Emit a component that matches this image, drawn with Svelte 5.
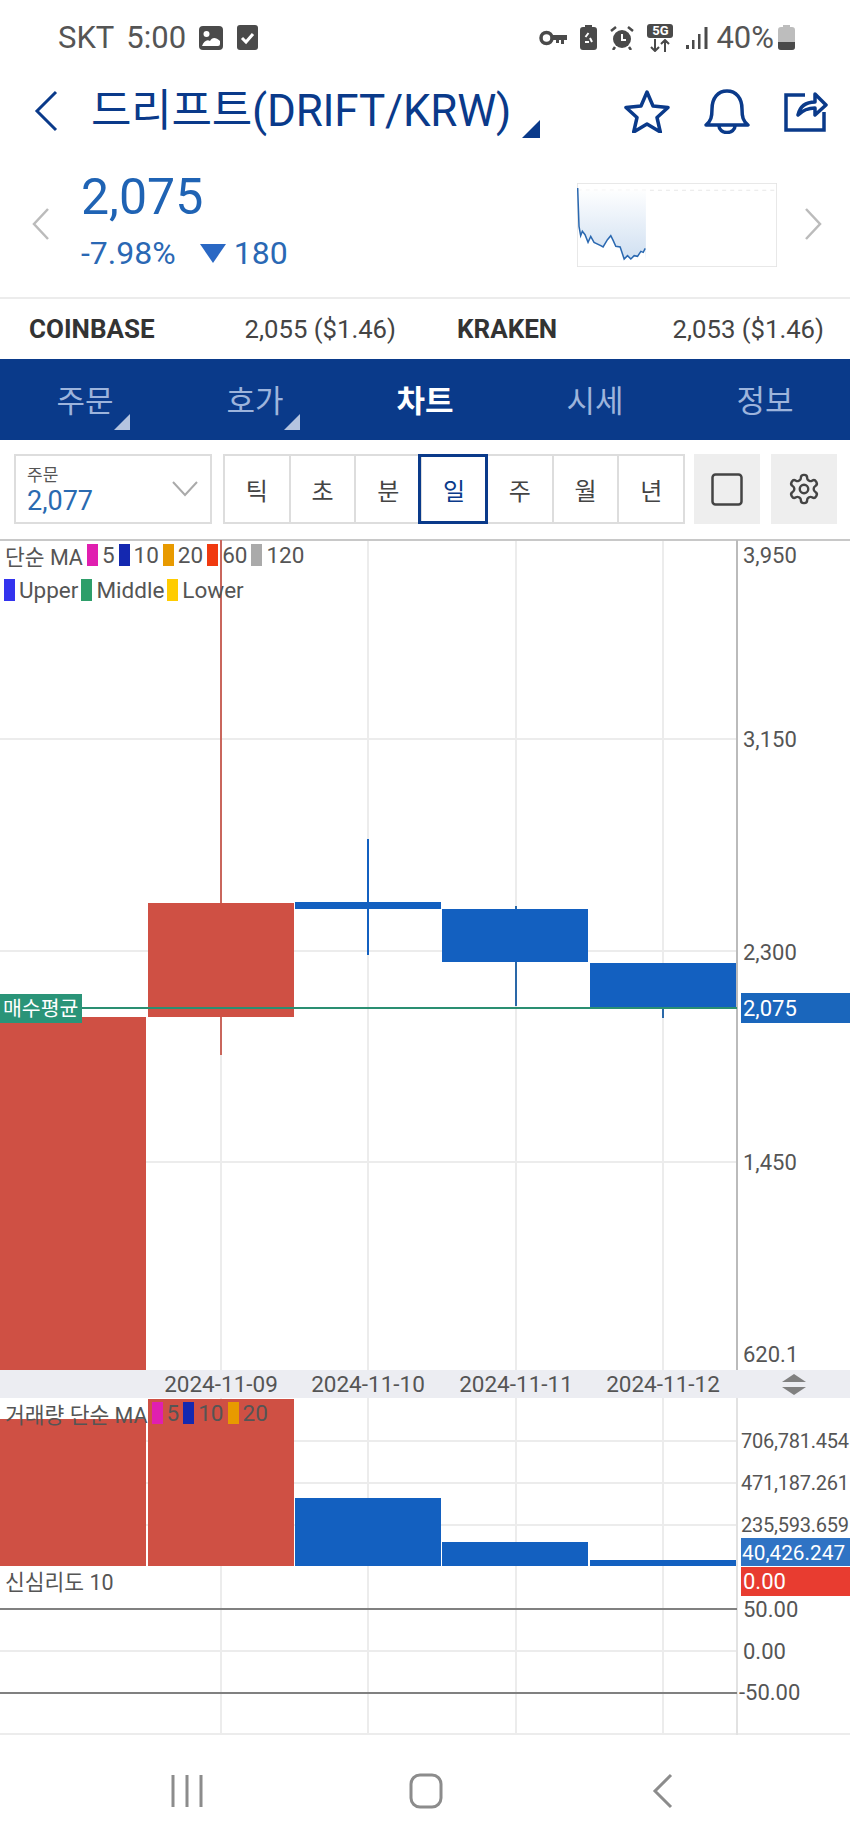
<script>
  const tabs = [
    { label: '주문', tri: true },
    { label: '호가', tri: true },
    { label: '차트', active: true },
    { label: '시세' },
    { label: '정보' }
  ];
  const periods = ['틱', '초', '분', '일', '주', '월', '년'];
  const gridX = [221, 368, 516, 663];
  const legendMain = [
    { c: '#e01fb0', t: '5' }, { c: '#1428b0', t: '10' }, { c: '#e89a00', t: '20' },
    { c: '#f03a10', t: '60' }, { c: '#aaaaaa', t: '120' }
  ];
  const legendBand = [
    { c: '#3333ee', t: 'Upper' }, { c: '#2e9e6a', t: 'Middle' }, { c: '#ffcc00', t: 'Lower' }
  ];
  const legendVol = legendMain.slice(0, 3);
  const spark = '456,565 460,680 465,708 470,695 478,705 487,728 495,710 505,728 525,738 532,742 545,720 555,708 562,722 570,740 583,742 595,778 605,768 615,778 625,768 635,770 645,755 652,758 658,746';
</script>

<div class="page">
  <header class="status">
    <div class="st-left">
      <span class="st-text">SKT</span>
      <span class="st-text time">5:00</span>
      <svg class="ic-img" width="24" height="24" viewBox="0 0 24 24"><rect x="0" y="0" width="24" height="24" rx="4" fill="#4a4a4a"/><circle cx="7.500" cy="8" r="3" fill="#fff"/><path d="M3 20c2-5 5-7 8-5 2-4 6-4 10 0v3a2 2 0 0 1-2 2z" fill="#fff"/></svg>
      <svg class="ic-chk" width="21" height="25" viewBox="0 0 21 25"><rect width="21" height="25" rx="3" fill="#4a4a4a"/><path d="M5 13l4 4 7-8" fill="none" stroke="#fff" stroke-width="3"/></svg>
    </div>
    <div class="st-right">
      <svg width="28" height="16" viewBox="0 0 28 16"><circle cx="7.500" cy="8" r="5.500" fill="none" stroke="#4a4a4a" stroke-width="3.500"/><path d="M13 5h15v5h-3v4h-3v-4h-2v3h-3v-3h-4z" fill="#4a4a4a"/></svg>
      <svg width="17" height="25" viewBox="0 0 17 25"><path d="M5 0h7v2h2a3 3 0 0 1 3 3v17a3 3 0 0 1-3 3H3a3 3 0 0 1-3-3V5a3 3 0 0 1 3-3h2z" fill="#4a4a4a"/><path d="M8.500 8l-3 4M5 17h4M12 17l-2-4" stroke="#fff" stroke-width="2" fill="none"/></svg>
      <svg width="24" height="24" viewBox="0 0 24 24"><circle cx="12" cy="13" r="9" fill="#4a4a4a"/><path d="M12 8v6h4" stroke="#fff" stroke-width="2" fill="none"/><path d="M1 5l5-4M23 5l-5-4M5 21l-2 3M19 21l2 3" stroke="#4a4a4a" stroke-width="2.500" fill="none"/></svg>
      <span class="g5">
        <span class="g5-box">5G</span>
        <svg width="20" height="13" viewBox="0 0 20 13"><path d="M5 0v12M1 8l4 4 4-4M15 13V1M11 5l4-4 4 4" stroke="#4a4a4a" stroke-width="2" fill="none"/></svg>
      </span>
      <svg width="22" height="22" viewBox="0 0 22 22"><g fill="#4a4a4a"><rect x="0" y="18" width="3" height="4"/><rect x="6" y="13" width="2.500" height="9"/><rect x="12" y="7" width="2.500" height="15"/><rect x="18.500" y="0" width="3" height="22"/></g></svg>
      <span class="st-text pct">40%</span>
      <svg width="17" height="25" viewBox="0 0 17 25"><path d="M5 0h7v2h2a3 3 0 0 1 3 3v17a3 3 0 0 1-3 3H3a3 3 0 0 1-3-3V5a3 3 0 0 1 3-3h2z" fill="#bdbdbd"/><path d="M0 17h17v5a3 3 0 0 1-3 3H3a3 3 0 0 1-3-3z" fill="#4a4a4a"/></svg>
    </div>
  </header>

  <section class="title-row">
    <svg class="back" width="24" height="42" viewBox="0 0 24 42"><path d="M22 2L3 21l19 19" fill="none" stroke="#0a3a8a" stroke-width="3"/></svg>
    <h1>드리프트(DRIFT/KRW)</h1>
    <span class="corner"></span>
    <div class="title-icons">
      <svg width="46" height="44" viewBox="0 0 46 44"><path d="M23 3l6 14 15 1.500-11 10 3.300 14.500L23 35l-13.300 8L13 28.500 2 18.500 17 17z" fill="none" stroke="#0a3a8a" stroke-width="3.500" stroke-linejoin="round"/></svg>
      <svg width="46" height="46" viewBox="0 0 46 46"><path d="M2 37c5-4 6-8 6-16 0-11 6-18 15-18s15 7 15 18c0 8 1 12 6 16z" fill="none" stroke="#0a3a8a" stroke-width="3.500" stroke-linejoin="round"/><path d="M15 38a8 6.500 0 0 0 16 0" fill="none" stroke="#0a3a8a" stroke-width="3.500"/></svg>
      <svg width="44" height="42" viewBox="0 0 44 42"><path d="M21 5H2v35h38V22" fill="none" stroke="#0a3a8a" stroke-width="3.500"/><path d="M14 25c2-9 8-13 17-13V4l11 11-11 10v-7c-7 0-12 2-17 7z" fill="none" stroke="#0a3a8a" stroke-width="3.500" stroke-linejoin="round"/></svg>
    </div>
  </section>

  <section class="price-row">
    <svg class="chev" width="18" height="32" viewBox="0 0 18 32"><path d="M16 1L2 16l14 15" fill="none" stroke="#bbb" stroke-width="2.500"/></svg>
    <div class="price">
      <div class="big">2,075</div>
      <div class="sub"><span>-7.98%</span><span class="delta"><i class="down"></i>180</span></div>
    </div>
    <svg class="spark" width="200" height="84" viewBox="454 550 598 252" preserveAspectRatio="none">
      <defs>
        <linearGradient id="sf" x1="0" y1="0" x2="0" y2="1"><stop offset="0" stop-color="#fff"/><stop offset="1" stop-color="#cfdff1"/></linearGradient>
      </defs>
      <rect x="455" y="551" width="596" height="250" fill="#fff" stroke="#e4e4e4" stroke-width="3"/>
      <path d="M456 572H1050" stroke="#e8e8e8" stroke-width="3" stroke-dasharray="12 12"/>
      <polygon points="{spark} 660,782 660,572 456,572" fill="url(#sf)"/>
      <polyline points={spark} fill="none" stroke="#2a68b0" stroke-width="4.500"/>
    </svg>
    <svg class="chev" width="18" height="32" viewBox="0 0 18 32"><path d="M2 1l14 15L2 31" fill="none" stroke="#bbb" stroke-width="2.500"/></svg>
  </section>

  <section class="exchange">
    <div class="ex"><b>COINBASE</b><span>2,055 ($1.46)</span></div>
    <div class="ex"><b>KRAKEN</b><span>2,053 ($1.46)</span></div>
  </section>

  <nav class="tabs">
    {#each tabs as t}
      <div class="tab" class:active={t.active}>{t.label}{#if t.tri}<i class="tri"></i>{/if}</div>
    {/each}
  </nav>

  <section class="tools">
    <div class="select">
      <div class="sel-text"><small>주문</small><span>2,077</span></div>
      <svg width="26" height="16" viewBox="0 0 26 16"><path d="M1 1l12 13L25 1" fill="none" stroke="#aaa" stroke-width="2"/></svg>
    </div>
    <div class="seg">
      {#each periods as p}
        <div class="cell" class:on={p === '일'}>{p}</div>
      {/each}
    </div>
    <div class="sq">
      <svg width="32" height="33" viewBox="0 0 32 33"><rect x="1.500" y="1.500" width="29" height="30" rx="3" fill="none" stroke="#444" stroke-width="2.500"/></svg>
    </div>
    <div class="sq">
      <svg width="34" height="34" viewBox="0 0 24 24" fill="none" stroke="#444" stroke-width="1.700"><path d="M12.220 2h-.44a2 2 0 0 0-2 2v.18a2 2 0 0 1-1 1.730l-.43.250a2 2 0 0 1-2 0l-.15-.08a2 2 0 0 0-2.730.73l-.22.380a2 2 0 0 0 .73 2.730l.15.100a2 2 0 0 1 1 1.720v.510a2 2 0 0 1-1 1.740l-.15.090a2 2 0 0 0-.73 2.730l.22.380a2 2 0 0 0 2.730.73l.15-.08a2 2 0 0 1 2 0l.43.250a2 2 0 0 1 1 1.730V20a2 2 0 0 0 2 2h.44a2 2 0 0 0 2-2v-.18a2 2 0 0 1 1-1.730l.43-.250a2 2 0 0 1 2 0l.15.080a2 2 0 0 0 2.730-.73l.22-.390a2 2 0 0 0-.73-2.730l-.15-.080a2 2 0 0 1-1-1.740v-.500a2 2 0 0 1 1-1.740l.15-.090a2 2 0 0 0 .73-2.730l-.22-.380a2 2 0 0 0-2.730-.73l-.15.080a2 2 0 0 1-2 0l-.43-.250a2 2 0 0 1-1-1.730V4a2 2 0 0 0-2-2z"/><circle cx="12" cy="12" r="3"/></svg>
    </div>
  </section>

  <section class="pane main">
    <svg width="850" height="831" viewBox="0 539 850 831">
      <g class="grid">
        {#each gridX as x}<line x1={x} x2={x} y1="540" y2="1370"/>{/each}
        {#each [739, 951, 1162] as y}<line x1="0" x2="737" y1={y} y2={y}/>{/each}
      </g>
      <rect x="0" y="539" width="850" height="2" fill="#c8c8c8"/>
      <rect x="736" y="540" width="2" height="830" fill="#bbb"/>
      <line x1="221" x2="221" y1="540" y2="1055" stroke="#c9665c" stroke-width="2"/>
      <line x1="368" x2="368" y1="839" y2="955" stroke="#1360c0" stroke-width="2"/>
      <line x1="516" x2="516" y1="906" y2="1006" stroke="#2a68a8" stroke-width="2"/>
      <line x1="663" x2="663" y1="1008" y2="1018" stroke="#2a68a8" stroke-width="2"/>
      <rect x="0" y="1017" width="146" height="353" fill="#cf5044"/>
      <rect x="148" y="903" width="146" height="114" fill="#cf5044"/>
      <rect x="295" y="902" width="146" height="7" fill="#1360c0"/>
      <rect x="442" y="909" width="146" height="53" fill="#1360c0"/>
      <rect x="590" y="963" width="146" height="45" fill="#1360c0"/>
      <line x1="0" x2="737" y1="1008" y2="1008" stroke="#2a8f72" stroke-width="2"/>
      <rect x="0" y="994" width="82" height="29" fill="#2a9478"/>
      <text class="tag" x="3" y="1016">매수평균</text>
      <rect x="741" y="993" width="109" height="30" fill="#1a66bc"/>
      <text class="ax wh" x="743" y="1016">2,075</text>
      <text class="ax" x="743" y="563">3,950</text>
      <text class="ax" x="743" y="747">3,150</text>
      <text class="ax" x="743" y="960">2,300</text>
      <text class="ax" x="743" y="1170">1,450</text>
      <text class="ax" x="743" y="1362">620.1</text>
    </svg>
    <div class="legend">
      <div class="lg-row">
        <span class="lg-name">단순 MA</span>
        {#each legendMain as l}<i class="sw" style="background:{l.c}"></i><span class="num">{l.t}</span>{/each}
      </div>
      <div class="lg-row band">
        {#each legendBand as l}<i class="sw" style="background:{l.c}"></i><span class="word">{l.t}</span>{/each}
      </div>
    </div>
  </section>

  <section class="pane axis">
    <svg width="850" height="28" viewBox="0 1370 850 28">
      {#each [['2024-11-09', 221], ['2024-11-10', 368], ['2024-11-11', 516], ['2024-11-12', 663]] as d}
        <text class="ax mid" x={d[1]} y="1392">{d[0]}</text>
      {/each}
      <path d="M782 1382l12-8 12 8zM782 1387l12 8 12-8z" fill="#808080"/>
    </svg>
  </section>

  <section class="pane vol">
    <svg width="850" height="168" viewBox="0 1398 850 168">
      <g class="grid">
        {#each gridX as x}<line x1={x} x2={x} y1="1398" y2="1566"/>{/each}
        {#each [1441, 1483, 1525] as y}<line x1="0" x2="737" y1={y} y2={y}/>{/each}
      </g>
      <rect x="736" y="1398" width="2" height="168" fill="#e2e2e2"/>
      <rect x="0" y="1419" width="146" height="147" fill="#cf5044"/>
      <rect x="148" y="1399" width="146" height="167" fill="#cf5044"/>
      <rect x="295" y="1498" width="146" height="68" fill="#1360c0"/>
      <rect x="442" y="1542" width="146" height="24" fill="#1360c0"/>
      <rect x="590" y="1560" width="146" height="6" fill="#1360c0"/>
      <text class="ax tight" x="741" y="1448">706,781.454</text>
      <text class="ax tight" x="741" y="1490">471,187.261</text>
      <text class="ax tight" x="741" y="1532">235,593.659</text>
      <rect x="741" y="1538" width="109" height="28" fill="#2f73c4"/>
      <text class="ax wh cur" x="742" y="1560">40,426.247</text>
    </svg>
    <div class="legend vol-lg">
      <div class="lg-row">
        <span class="lg-name">거래량 단순 MA</span>
        {#each legendVol as l}<i class="sw" style="background:{l.c}"></i><span class="num">{l.t}</span>{/each}
      </div>
    </div>
  </section>

  <section class="pane senti">
    <svg width="850" height="169" viewBox="0 1566 850 169">
      <g class="grid">
        {#each gridX as x}<line x1={x} x2={x} y1="1566" y2="1735"/>{/each}
        <line x1="0" x2="737" y1="1651" y2="1651"/>
        <line x1="0" x2="850" y1="1734" y2="1734"/>
      </g>
      <rect x="736" y="1566" width="2" height="169" fill="#e2e2e2"/>
      <rect x="0" y="1608" width="737" height="2" fill="#808080"/>
      <rect x="0" y="1692" width="737" height="2" fill="#808080"/>
      <rect x="741" y="1567" width="109" height="29" fill="#e83c30"/>
      <text class="ax wh" x="743" y="1589">0.00</text>
      <text class="ax" x="743" y="1617">50.00</text>
      <text class="ax" x="743" y="1659">0.00</text>
      <text class="ax" x="739" y="1700">-50.00</text>
    </svg>
    <div class="legend senti-lg"><div class="lg-row"><span class="lg-name">신심리도 10</span></div></div>
  </section>

  <footer class="softnav">
    <svg width="32" height="34" viewBox="0 0 32 34"><path d="M2 1v32M16 1v32M30 1v32" stroke="#8c8c8c" stroke-width="3"/></svg>
    <svg class="home" width="34" height="36" viewBox="0 0 34 36"><rect x="2" y="2" width="30" height="32" rx="9" fill="none" stroke="#8c8c8c" stroke-width="3"/></svg>
    <svg width="21" height="36" viewBox="0 0 21 36"><path d="M19 2L3 18l16 16" fill="none" stroke="#8c8c8c" stroke-width="3"/></svg>
  </footer>
</div>

<style>
  :global(body) { margin: 0; background: #fff; }
  .page {
    width: 850px;
    height: 1842px;
    overflow: hidden;
    background: #fff;
    font-family: Roboto, "Noto Sans CJK KR", sans-serif;
    color: #444;
  }
  svg { display: block; }

  .status { height: 72px; box-sizing: border-box; padding: 3px 55px 0 58px; display: flex; justify-content: space-between; align-items: center; }
  .st-left, .st-right { display: flex; align-items: center; }
  .st-text { font-size: 31px; color: #555; line-height: 1; }
  .time { margin-left: 12px; }
  .ic-img { margin-left: 13px; }
  .ic-chk { margin-left: 14px; }
  .st-right { gap: 13px; }
  .pct { margin-left: -5px; margin-right: -9px; }
  .g5 { display: flex; flex-direction: column; align-items: center; width: 26px; gap: 1px; }
  .g5-box { background: #4a4a4a; color: #fff; font-size: 13px; font-weight: 700; line-height: 14px; width: 26px; text-align: center; border-radius: 3px; }

  .title-row { height: 78px; box-sizing: border-box; padding: 0 22px 0 34px; display: flex; align-items: center; position: relative; }
  h1 { margin: 0 0 0 33px; font-weight: 400; font-size: 44px; line-height: 1; color: #0a3a8a; white-space: nowrap; letter-spacing: -.2px; }
  .corner { width: 0; height: 0; margin: 36px 0 0 11px; border-left: 18px solid transparent; border-bottom: 18px solid #0a3a8a; }
  .title-icons { margin-left: auto; display: flex; align-items: center; gap: 34px; }

  .price-row { height: 147px; box-sizing: border-box; padding: 0 28px 0 32px; display: flex; align-items: center; }
  .price { margin-left: 31px; flex: 1; padding-bottom: 6px; }
  .big { font-size: 50px; line-height: 58px; color: #1f63b4; }
  .sub { display: flex; align-items: center; font-size: 32px; line-height: 40px; color: #2a68b4; margin-top: 7px; }
  .delta { display: flex; align-items: center; margin-left: 24px; }
  .down { display: block; width: 0; height: 0; margin-right: 8px; border-left: 13px solid transparent; border-right: 13px solid transparent; border-top: 19px solid #2a68c4; }
  .spark { margin-right: 27px; margin-top: 3px; }

  .exchange { height: 62px; box-sizing: border-box; border-top: 2px solid #ececec; padding: 0 26px 0 29px; display: grid; grid-template-columns: 367px 367px; justify-content: space-between; align-items: center; }
  .ex { display: flex; justify-content: space-between; font-size: 26px; color: #444; }
  .ex span { font-size: 25.700px; }
  .ex b { color: #333; }

  .tabs { height: 81px; background: #0a3a8a; display: grid; grid-template-columns: repeat(5, 1fr); border-top: 1px solid #0a3a8a; box-sizing: border-box; }
  .tab { position: relative; display: flex; align-items: center; justify-content: center; font-size: 31px; color: #9db4dc; padding-bottom: 3px; }
  .tab.active { color: #fff; font-weight: 700; }
  .tri { position: absolute; right: 40px; bottom: 10px; width: 0; height: 0; border-left: 16px solid transparent; border-bottom: 16px solid #b4c4e0; }

  .tools { height: 99px; box-sizing: border-box; padding: 14px 12px 15px 14px; display: flex; }
  .select { width: 198px; box-sizing: border-box; border: 2px solid #ddd; display: flex; align-items: center; justify-content: space-between; padding: 0 12px 0 11px; }
  .sel-text { display: flex; flex-direction: column; padding-top: 4px; }
  .sel-text small { font-size: 17px; line-height: 21px; color: #555; }
  .sel-text span { font-size: 27px; line-height: 31px; color: #2a6ab0; }
  .seg { margin-left: 11px; display: flex; width: 462px; border: 2px solid #ddd; box-sizing: border-box; }
  .cell { flex: 1; display: flex; align-items: center; justify-content: center; font-size: 24px; color: #444; border-left: 2px solid #ddd; box-sizing: border-box; }
  .cell:first-child { border-left: 0; }
  .cell.on { color: #0a3a8a; outline: 3px solid #0a3a8a; outline-offset: -1px; position: relative; }
  .sq { width: 66px; margin-left: 9px; background: #eeeeee; display: flex; align-items: center; justify-content: center; }
  .sq + .sq { margin-left: 11px; }

  .pane { position: relative; }
  .main { height: 831px; }
  .axis { height: 28px; background: #ecedf2; }
  .vol { height: 168px; }
  .senti { height: 169px; }
  .grid line { stroke: #ececec; stroke-width: 2; }
  .ax { font-size: 22px; fill: #555; font-family: Roboto, sans-serif; }
  .ax.mid { text-anchor: middle; font-size: 22.500px; }
  .ax.tight { font-size: 20px; letter-spacing: -.25px; }
  .ax.cur { font-size: 20.800px; }
  .ax.wh { fill: #fff; }
  .tag { font-size: 20.500px; fill: #fff; font-family: "Noto Sans CJK KR", sans-serif; }

  .legend { position: absolute; left: 0; top: -1px; font-size: 21.500px; color: #555; display: flex; flex-direction: column; }
  .lg-row { display: flex; align-items: center; height: 34px; padding-left: 5px; }
  .lg-row span { margin-right: 4px; }
  .lg-row .num { font-size: 22.500px; }
  .lg-row .word { font-size: 22.500px; margin-right: 3px; }
  .lg-name { margin-right: 4px; }
  .lg-row.band { padding-left: 4px; height: 36px; }
  .sw { display: block; width: 11px; height: 22px; margin-right: 4px; }
  .vol-lg { top: -2px; }
  .senti-lg { top: -3px; }

  .softnav { height: 107px; box-sizing: border-box; display: flex; align-items: center; padding: 4px 177px 0 171px; justify-content: space-between; }
  .home { margin-right: 4px; }
</style>
